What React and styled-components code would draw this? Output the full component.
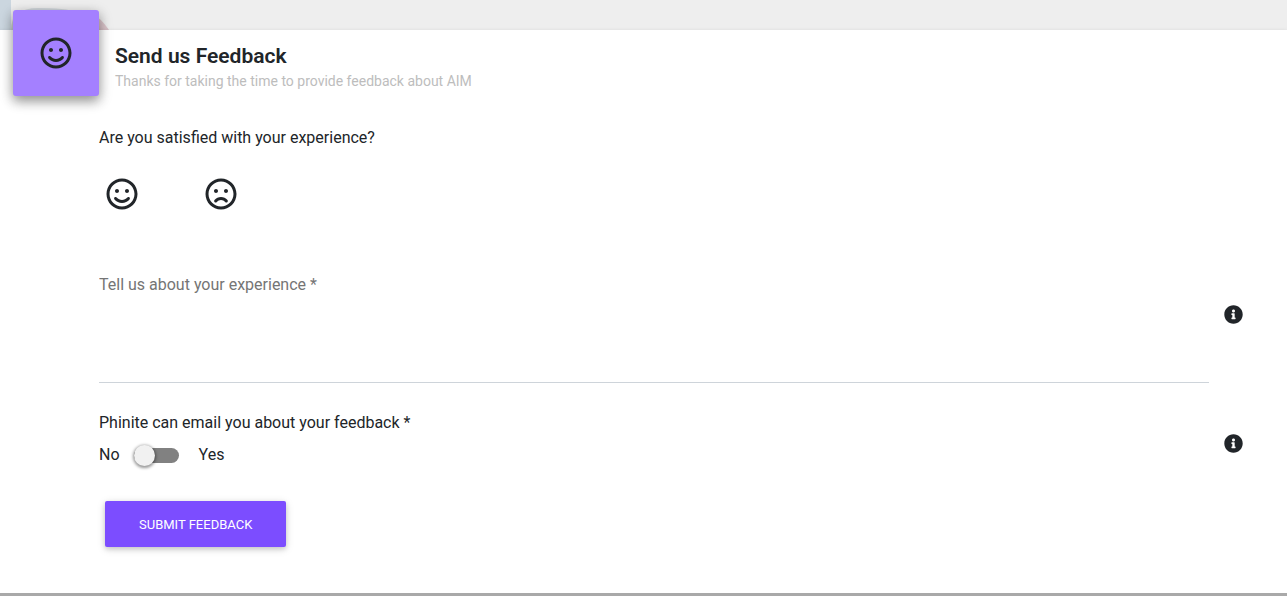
import { useState } from "react";
import styled, { createGlobalStyle } from "styled-components";
import { FaInfoCircle, FaRegFrown, FaRegSmile } from "react-icons/fa";

const GlobalStyle = createGlobalStyle`
  * {
    box-sizing: border-box;
  }
  body {
    margin: 0;
    background: #eeeeee;
    color: #212529;
    font-family: Roboto, "Liberation Sans", sans-serif;
    font-size: 16px;
    line-height: 24px;
  }
`;

const Page = styled.div`
  display: flex;
  flex-direction: column;
  min-height: 100vh;
`;

const Backdrop = styled.div`
  height: 30px;
  overflow: hidden;
  svg {
    display: block;
  }
`;

const Card = styled.main`
  flex: 1;
  padding: 0 13px 46px;
  background: #ffffff;
  border-bottom: 3px solid #a9a9a9;
  box-shadow: 0 1px 4px rgba(0, 0, 0, 0.14);
`;

const Header = styled.header`
  display: flex;
  gap: 16px;
  margin-top: -20px;
`;

const Tile = styled.div`
  display: flex;
  align-items: center;
  justify-content: center;
  width: 86px;
  height: 86px;
  border-radius: 3px;
  background: #a480ff;
  box-shadow: 0 5px 11px rgba(0, 0, 0, 0.3), 0 4px 15px rgba(0, 0, 0, 0.2);
`;

const Heading = styled.div`
  padding-top: 34px;
  h1 {
    margin: 0;
    font-size: 21px;
    font-weight: 600;
    line-height: 24px;
  }
  p {
    margin: 2px 0 0;
    color: #bdbdbd;
    font-size: 14px;
    line-height: 22px;
  }
`;

const Form = styled.form`
  padding: 30px 0 0 86px;
`;

const Fieldset = styled.fieldset`
  margin: 0;
  padding: 0;
  border: 0;
  legend {
    padding: 0;
  }
`;

const Faces = styled.div`
  display: flex;
  gap: 52px;
  padding: 28px 0 0;
`;

const FaceButton = styled.button`
  display: flex;
  padding: 0 8px 0 7px;
  border: 0;
  background: none;
  color: ${(props) => (props.$active ? "#7c4dff" : "inherit")};
  cursor: pointer;
`;

const Row = styled.div`
  display: flex;
  align-items: center;
  justify-content: space-between;
  gap: 15px;
  padding-right: 31px;
  margin-top: ${(props) => props.$top}px;
`;

const Comment = styled.textarea`
  display: block;
  flex: 1;
  height: 138px;
  padding: 28px 0 0;
  border: 0;
  border-bottom: 1px solid #ced4da;
  outline: none;
  resize: none;
  background: none;
  color: inherit;
  font: inherit;
  &::placeholder {
    color: #757575;
    opacity: 1;
  }
`;

const InfoButton = styled.button`
  display: flex;
  padding: 0;
  border: 0;
  background: none;
  color: inherit;
  cursor: pointer;
`;

const Consent = styled.div`
  padding-bottom: 8px;
`;

const SwitchLabel = styled.label`
  display: flex;
  align-items: center;
  margin-top: 8px;
`;

const Switch = styled.input`
  appearance: none;
  display: flex;
  align-items: center;
  width: 45px;
  height: 15px;
  margin: 0 20px 0 14px;
  border-radius: 15px;
  background: ${(props) => (props.checked ? "#b39dfa" : "#818181")};
  cursor: pointer;
  &::before {
    content: "";
    flex: none;
    width: 21px;
    height: 21px;
    margin-left: ${(props) => (props.checked ? 24 : 0)}px;
    border-radius: 50%;
    background: ${(props) => (props.checked ? "#7c4dff" : "#f1f1f1")};
    box-shadow: 0 1px 3px 1px rgba(0, 0, 0, 0.4);
  }
`;

const SubmitButton = styled.button`
  margin: 26px 6px 0;
  padding: 13px 34px 11px;
  border: 0;
  border-radius: 2px;
  background: #7c4dff;
  box-shadow: 0 2px 5px rgba(0, 0, 0, 0.16), 0 2px 10px rgba(0, 0, 0, 0.12);
  color: #ffffff;
  font: inherit;
  font-size: 13px;
  line-height: 22px;
  text-transform: uppercase;
  cursor: pointer;
`;

function App() {
  const [mood, setMood] = useState("");
  const [comment, setComment] = useState("");
  const [canEmail, setCanEmail] = useState(false);

  function onSubmit(e) {
    e.preventDefault();
  }

  return (
    <>
      <GlobalStyle />
      <Page>
        <Backdrop>
          <svg width="120" height="30" aria-hidden="true">
            <rect width="11" height="30" fill="#cbd6df" />
            <path d="M11 30 Q11 8 38 8 Q66 8 76 12 V30 Z" fill="#cfd5d9" />
            <path d="M90 12 Q101 18 109 30 H90 Z" fill="#dcc5cb" />
          </svg>
        </Backdrop>
        <Card>
          <Header>
            <Tile>
              <FaRegSmile size={32} />
            </Tile>
            <Heading>
              <h1>Send us Feedback</h1>
              <p>Thanks for taking the time to provide feedback about AIM</p>
            </Heading>
          </Header>
          <Form onSubmit={onSubmit}>
            <Fieldset>
              <legend>Are you satisfied with your experience?</legend>
              <Faces>
                <FaceButton
                  type="button"
                  aria-label="Satisfied"
                  $active={mood === "good"}
                  onClick={() => setMood("good")}
                >
                  <FaRegSmile size={32} />
                </FaceButton>
                <FaceButton
                  type="button"
                  aria-label="Not satisfied"
                  $active={mood === "bad"}
                  onClick={() => setMood("bad")}
                >
                  <FaRegFrown size={32} />
                </FaceButton>
              </Faces>
            </Fieldset>
            <Row $top={35}>
              <Comment
                aria-label="Tell us about your experience"
                placeholder="Tell us about your experience *"
                value={comment}
                onChange={(e) => setComment(e.target.value)}
              />
              <InfoButton type="button" aria-label="About this question">
                <FaInfoCircle size={19} />
              </InfoButton>
            </Row>
            <Row $top={28}>
              <Consent>
                <div>Phinite can email you about your feedback *</div>
                <SwitchLabel>
                  No
                  <Switch
                    type="checkbox"
                    checked={canEmail}
                    onChange={(e) => setCanEmail(e.target.checked)}
                  />
                  Yes
                </SwitchLabel>
              </Consent>
              <InfoButton type="button" aria-label="About email contact">
                <FaInfoCircle size={19} />
              </InfoButton>
            </Row>
            <SubmitButton type="submit">Submit feedback</SubmitButton>
          </Form>
        </Card>
      </Page>
    </>
  );
}

export default App;
